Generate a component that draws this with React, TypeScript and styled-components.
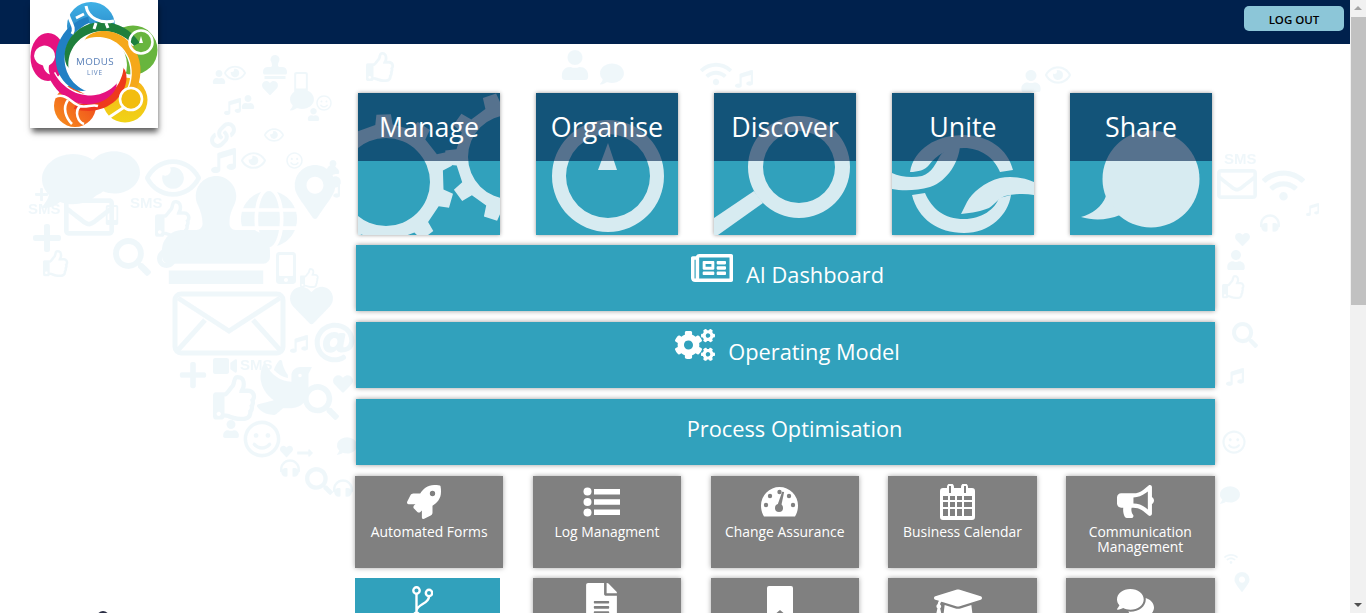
import React from "react";
import styled, { createGlobalStyle } from "styled-components";
import {
  FaAt,
  FaBullhorn,
  FaCogs,
  FaComment,
  FaComments,
  FaDove,
  FaFileAlt,
  FaGlobe,
  FaGraduationCap,
  FaHeadphones,
  FaHeart,
  FaLink,
  FaLongArrowAltRight,
  FaMapMarkerAlt,
  FaMobileAlt,
  FaMusic,
  FaPlus,
  FaRegEnvelope,
  FaRegEye,
  FaRegNewspaper,
  FaRegSmile,
  FaRegThumbsUp,
  FaRocket,
  FaSearch,
  FaStamp,
  FaUser,
  FaVideo,
  FaWifi,
} from "react-icons/fa";

const GlobalStyle = createGlobalStyle`
  html, body {
    margin: 0;
    height: 613px;
    overflow: hidden;
    background: #fff;
    font-family: "Open Sans", "Noto Sans", sans-serif;
  }
`;

const Shell = styled.div`
  display: flex;
  height: 613px;
  overflow: hidden;
`;

const Page = styled.div`
  position: relative;
  flex: 1;
  height: 613px;
  overflow: hidden;
`;

const Wallpaper = styled.svg`
  position: absolute;
  top: 0;
  left: 0;
  width: 1350px;
  height: 613px;
  color: #e6f2f8;
  filter: blur(0.7px);
  opacity: 0.6;
`;

const TopBar = styled.header`
  position: relative;
  display: flex;
  justify-content: flex-end;
  height: 44px;
  padding: 6px 6px 0 0;
  box-sizing: border-box;
  background: #00214d;
`;

const LogoutButton = styled.button`
  width: 100px;
  height: 25px;
  padding: 1px 0 0;
  border: none;
  border-radius: 5px;
  background: #8cc6d8;
  color: #000;
  font-family: inherit;
  font-size: 11.5px;
  font-weight: 600;
`;

const LogoCard = styled.div`
  position: absolute;
  top: 0;
  left: 30px;
  width: 128px;
  height: 128px;
  background: #fff;
  box-shadow: 1px 5px 6px -1px rgba(0, 0, 0, 0.65);
  svg {
    display: block;
    filter: blur(0.35px);
  }
`;

const Content = styled.main`
  position: relative;
  display: flex;
  flex-direction: column;
  width: 860px;
  margin-left: 355px;
`;

const PillarRow = styled.div`
  display: flex;
  gap: 36px;
  margin: 49px 0 10px 3px;
`;

const Pillar = styled.div`
  position: relative;
  width: 142px;
  height: 142px;
  background: #31a1bc;
  box-shadow: 0 0 4px rgba(0, 0, 0, 0.4);
  overflow: hidden;
  svg {
    display: block;
    fill: #d7ebf1;
  }
  &::after {
    content: "";
    position: absolute;
    top: 0;
    left: 0;
    right: 0;
    height: 68px;
    background: rgba(0, 33, 77, 0.6);
  }
`;

const PillarTitle = styled.span`
  position: absolute;
  z-index: 1;
  top: 14px;
  left: 0;
  right: 0;
  color: #fff;
  font-size: 26.8px;
  line-height: 40px;
  text-align: center;
`;

const Bars = styled.div`
  display: flex;
  flex-direction: column;
  gap: 11px;
  margin: 0 0 11px 1px;
`;

const Bar = styled.div<{ $inset?: number }>`
  display: flex;
  align-items: center;
  justify-content: center;
  gap: 13px;
  width: 859px;
  height: 66px;
  padding: 0 0 8px ${(p) => p.$inset ?? 4}px;
  box-sizing: border-box;
  background: #31a1bc;
  color: #fff;
  box-shadow: 0 0 5px rgba(0, 0, 0, 0.4);
  font-size: 21.8px;
  svg {
    margin-top: -12px;
  }
`;

const ModuleGrid = styled.div`
  display: grid;
  grid-template-columns: repeat(5, 148.4px);
  column-gap: 29.4px;
  row-gap: 10px;
`;

const Module = styled.div<{ $active?: boolean }>`
  display: flex;
  flex-direction: column;
  align-items: center;
  width: ${(p) => (p.$active ? "145px" : "auto")};
  height: 92px;
  padding-top: 8px;
  box-sizing: border-box;
  background: ${(p) => (p.$active ? "#31a1bc" : "#808080")};
  box-shadow: ${(p) => (p.$active ? "none" : "0 0 5px rgba(0, 0, 0, 0.35)")};
  color: #fff;
`;

const ModuleIcon = styled.div`
  display: flex;
  align-items: center;
  justify-content: center;
  height: 35px;
  margin: 0 10px 5px 0;
`;

const ModuleLabel = styled.span`
  width: 130px;
  font-size: 13.9px;
  line-height: 15px;
  text-align: center;
`;

const AvatarTip = styled.div`
  position: absolute;
  left: 97px;
  top: 611px;
  width: 12px;
  height: 12px;
  border-radius: 50%;
  background: #2b2f45;
`;

const Scrollbar = styled.aside`
  display: flex;
  flex-direction: column;
  align-items: center;
  width: 16px;
  height: 613px;
  background: #f1f1f1;
`;

const ScrollArrow = styled.div<{ $down?: boolean }>`
  width: 0;
  height: 0;
  margin: ${(p) => (p.$down ? "auto 0 6px" : "6px 0 6px")};
  border-left: 4px solid transparent;
  border-right: 4px solid transparent;
  border-bottom: ${(p) => (p.$down ? "0" : "4px solid #a3a3a3")};
  border-top: ${(p) => (p.$down ? "4px solid #505050" : "0")};
`;

const ScrollThumb = styled.div`
  width: 15px;
  height: 288px;
  margin-top: 1px;
  background: #c1c1c1;
`;

const LogoWord = styled.text<{ $size: number; $track: number }>`
  fill: #5a80b8;
  font-family: "Open Sans", sans-serif;
  font-size: ${(p) => p.$size}px;
  letter-spacing: ${(p) => p.$track}px;
  text-anchor: middle;
`;

const WallText = styled.text`
  font-family: "Liberation Sans", sans-serif;
  font-size: 15px;
  font-weight: 700;
  fill: #e6f2f8;
`;

// gear outline with a round hole, used by the Manage tile
const gearPath = (cx: number, cy: number, r: number, tip: number, hole: number, teeth: number, turn = 0) => {
  const pt = (rad: number, a: number) => `${(cx + rad * Math.cos(a)).toFixed(1)} ${(cy + rad * Math.sin(a)).toFixed(1)}`;
  const step = (Math.PI * 2) / teeth;
  let d = "";
  for (let i = 0; i < teeth; i++) {
    const a = turn + i * step;
    d += `${i ? "L" : "M"}${pt(r, a - step * 0.24)} L${pt(tip, a - step * 0.17)} L${pt(tip, a + step * 0.17)} L${pt(r, a + step * 0.24)} `;
  }
  d += `Z M${cx - hole} ${cy} a${hole} ${hole} 0 1 0 ${hole * 2} 0 a${hole} ${hole} 0 1 0 ${-hole * 2} 0 Z`;
  return d;
};

// one arm of the logo swirl: a tip at startDeg that widens clockwise into its petal
const swirlEdges = (startDeg: number, sweepDeg: number) => {
  const inner: string[] = [];
  const outer: string[] = [];
  for (let i = 0; i <= 24; i++) {
    const t = i / 24;
    const a = ((startDeg + sweepDeg * t) * Math.PI) / 180;
    const rIn = 27 + 15 * t * t;
    const rOut = 27 + 22 * Math.pow(t, 0.7);
    inner.push(`${(66 + rIn * Math.cos(a)).toFixed(1)} ${(65 + rIn * Math.sin(a)).toFixed(1)}`);
    outer.push(`${(66 + rOut * Math.cos(a)).toFixed(1)} ${(65 + rOut * Math.sin(a)).toFixed(1)}`);
  }
  return {
    fill: `M${inner.join(" L")} L${outer.reverse().join(" L")} Z`,
    edge: `M${inner.join(" L")}`,
  };
};

const swirlArms = [
  { start: 111, sweep: 150, color: "#2180c4" },
  { start: 173, sweep: 160, color: "#1f7f3c" },
  { start: -116, sweep: 166, color: "#f5a81a" },
  { start: 5, sweep: 112, color: "#ee3a1c" },
  { start: 40, sweep: 130, color: "#e5127f" },
];

const ManageArt = () => (
  <svg width="142" height="142" viewBox="0 0 142 142">
    <path fillRule="evenodd" d={gearPath(28, 89, 58, 68, 44, 10, 0.28)} />
    <path fillRule="evenodd" d={gearPath(152, 64, 54, 65, 42, 10, 0.62)} />
  </svg>
);

const OrganiseArt = () => (
  <svg width="142" height="142" viewBox="0 0 142 142">
    <path fillRule="evenodd" d="M16 83a56 56 0 1 0 112 0a56 56 0 1 0 -112 0Z M30 83a42 42 0 1 1 84 0a42 42 0 1 1 -84 0Z" />
    <path d="M72 50L81 77H62Z" />
  </svg>
);

const DiscoverArt = () => (
  <svg width="142" height="142" viewBox="0 0 142 142">
    <path fillRule="evenodd" d="M34 74a51 51 0 1 0 102 0a51 51 0 1 0 -102 0Z M49 74a36 36 0 1 1 72 0a36 36 0 1 1 -72 0Z" />
    <path d="M40 98L49 110L4 142H0V125Z" />
  </svg>
);

const UniteArt = () => (
  <svg width="142" height="142" viewBox="0 0 142 142">
    <path d="M18 79C22 56 44 42 72 42C96 42 116 56 121 77L108 79C102 64 88 55 72 55C56 55 44 62 37 72C33 77 26 79 18 79Z" />
    <path d="M20 102C26 126 46 140 72 140C98 140 116 122 119 102L107 105C103 116 90 126 72 126C52 126 40 116 33 100Z" />
    <path d="M0 80C8 84 20 85 30 83C40 80 44 70 48 63C53 56 60 54 68 53C67 68 56 88 38 94C24 98 10 98 0 96Z" />
    <path d="M142 89C130 84 118 83 108 85C92 89 80 100 75 109L69 121C80 120 90 118 97 115C103 111 107 105 113 103C122 101 132 100 142 102Z" />
  </svg>
);

const ShareArt = () => (
  <svg width="142" height="142" viewBox="0 0 142 142">
    <circle cx="81" cy="86" r="48.5" />
    <path d="M36 103C32 114 22 121 11 124C24 128 38 127 50 122Z" />
  </svg>
);

const ListIcon = () => (
  <svg width="37" height="30" viewBox="0 0 37 30">
    <g fill="#fff">
      <circle cx="4.5" cy="4.5" r="4" />
      <circle cx="4.5" cy="15" r="4" />
      <circle cx="4.5" cy="25.5" r="4" />
      <path d="M11 2h26v5.5H11Z M11 12.2h26v5.5H11Z M11 22.6h26v5.5H11Z" />
    </g>
  </svg>
);

const GaugeIcon = () => (
  <svg width="37" height="30" viewBox="0 0 37 30">
    <path fill="#fff" d="M18.5 0A18.5 18.5 0 0 1 37 18.5c0 4-1 8-3 11H3c-2-3-3-7-3-11A18.5 18.5 0 0 1 18.5 0Z" />
    <g fill="#808080">
      <circle cx="18.5" cy="5" r="2.2" />
      <circle cx="9" cy="9" r="2.2" />
      <circle cx="28" cy="9" r="2.2" />
      <circle cx="5" cy="18" r="2.2" />
      <circle cx="32" cy="18" r="2.2" />
      <circle cx="18" cy="21" r="4" />
      <path d="M19 4.5l2 0l-1 15l-4 0Z" transform="rotate(8 18 20)" />
    </g>
  </svg>
);

const CalendarIcon = () => (
  <svg width="35" height="36" viewBox="0 0 35 36">
    <path
      fill="#fff"
      fillRule="evenodd"
      d="M3 4h4V3a3 3 0 0 1 7 0v1h7V3a3 3 0 0 1 7 0v1h4a3 3 0 0 1 3 3v26a3 3 0 0 1-3 3H3a3 3 0 0 1-3-3V7a3 3 0 0 1 3-3Z
      M3 12v4h5v-4Z M10 12v4h5v-4Z M17 12v4h5v-4Z M24 12v4h8v-4Z
      M3 18v5h5v-5Z M10 18v5h5v-5Z M17 18v5h5v-5Z M24 18v5h8v-5Z
      M3 25v7h5v-7Z M10 25v7h5v-7Z M17 25v7h5v-7Z M24 25v7h8v-7Z"
    />
    <path fill="#808080" d="M9 2h2v7H9Z M24 2h2v7h-2Z" />
  </svg>
);

const BookmarkIcon = () => (
  <svg width="26" height="35" viewBox="0 0 26 35">
    <path fill="#fff" d="M2 0h22a2 2 0 0 1 2 2v33L13 24L0 35V2a2 2 0 0 1 2-2Z" />
  </svg>
);

const BranchIcon = () => (
  <svg width="21" height="35" viewBox="0 0 21 35" fill="none" stroke="#fff" strokeWidth="2.4">
    <circle cx="4.5" cy="4.5" r="3.2" />
    <circle cx="17" cy="7" r="3.2" />
    <circle cx="4.5" cy="30" r="3.2" />
    <path d="M4.5 8V27M17 10.5C17 18 5 18 4.5 25" />
  </svg>
);

const Logo = () => (
  <svg width="128" height="128" viewBox="0 0 128 128">
    <defs>
      <linearGradient id="lgBlue" x1="0" y1="0" x2="0" y2="1">
        <stop offset="0" stopColor="#3fb1e6" />
        <stop offset="1" stopColor="#1f74b8" />
      </linearGradient>
      <linearGradient id="lgYellow" x1="0" y1="0" x2="0" y2="1">
        <stop offset="0" stopColor="#f7b21b" />
        <stop offset="1" stopColor="#f0d316" />
      </linearGradient>
      <linearGradient id="lgRed" x1="1" y1="0" x2="0" y2="1">
        <stop offset="0" stopColor="#ee3a1c" />
        <stop offset="1" stopColor="#f7931e" />
      </linearGradient>
    </defs>
    <ellipse cx="18" cy="57" rx="17.5" ry="24" fill="#e5127f" />
    <circle cx="61" cy="26" r="24" fill="url(#lgBlue)" />
    <circle cx="103" cy="50" r="24.5" fill="#68b53e" />
    <circle cx="95" cy="100" r="22.5" fill="url(#lgYellow)" />
    <circle cx="45" cy="106" r="21" fill="url(#lgRed)" />
    <circle cx="66" cy="65" r="31" fill="#fff" />
    {swirlArms.map((arm) => {
      const { fill, edge } = swirlEdges(arm.start, arm.sweep);
      return (
        <g key={arm.start}>
          <path d={fill} fill={arm.color} />
          <path d={edge} fill="none" stroke="#fff" strokeWidth="1.4" />
        </g>
      );
    })}
    <path fill="#fff" d="M4 56a10.5 10.5 0 1 1 15 9.5c-.5 3-.5 6 1 9c-3-1-6-4-7-9a10.5 10.5 0 0 1-9-9.5Z" />
    <g fill="none" stroke="#fff" strokeWidth="2.6">
      <circle cx="111" cy="42" r="11.5" />
      <circle cx="101" cy="99" r="11" fill="#f2bd0f" />
      <path d="M93 108L78 118" strokeLinecap="round" strokeWidth="3" />
      <path d="M25 97C36 92 42 104 50 106C56 108 62 104 68 106" />
      <path d="M38 100C32 108 36 118 42 124" />
      <path d="M50 106C44 112 48 122 54 124" />
      <path d="M38 14C40 22 46 28 42 34" strokeWidth="3" />
      <path d="M56 6C58 18 70 24 84 21" strokeWidth="3" />
      <path d="M46 18L54 14M66 23L64 29M76 23L78 28" strokeWidth="3" />
    </g>
    <path d="M111 36L113 43H109Z" fill="#fff" />
    <LogoWord x="65" y="65" $size={9.8} $track={0.4}>MODUS</LogoWord>
    <LogoWord x="65" y="74.5" $size={6.5} $track={0.8}>LIVE</LogoWord>
  </svg>
);

// faint social icons printed on the page background: [icon, x, y, size]
const wallIcons: [React.ComponentType<any>, number, number, number][] = [
  [FaComment, 42, 150, 62],
  [FaComment, 88, 148, 52],
  [FaRegEye, 145, 150, 56],
  [FaStamp, 162, 176, 108],
  [FaGlobe, 240, 190, 58],
  [FaMapMarkerAlt, 288, 165, 54],
  [FaUser, 322, 165, 20],
  [FaMusic, 322, 182, 18],
  [FaPlus, 34, 187, 15],
  [FaRegEnvelope, 64, 192, 50],
  [FaMobileAlt, 102, 205, 20],
  [FaRegThumbsUp, 155, 200, 38],
  [FaPlus, 31, 222, 32],
  [FaRegThumbsUp, 43, 250, 27],
  [FaSearch, 113, 238, 38],
  [FaLink, 157, 236, 32],
  [FaMobileAlt, 270, 252, 32],
  [FaRegThumbsUp, 300, 268, 20],
  [FaHeart, 290, 284, 43],
  [FaPlus, 178, 360, 30],
  [FaVideo, 213, 354, 24],
  [FaMusic, 290, 335, 18],
  [FaAt, 314, 322, 41],
  [FaDove, 257, 360, 55],
  [FaSearch, 303, 384, 36],
  [FaHeart, 333, 374, 20],
  [FaRegThumbsUp, 213, 375, 46],
  [FaUser, 222, 420, 18],
  [FaRegSmile, 243, 420, 38],
  [FaHeart, 280, 445, 13],
  [FaLongArrowAltRight, 296, 444, 18],
  [FaHeadphones, 280, 458, 20],
  [FaSearch, 305, 467, 28],
  [FaHeadphones, 333, 478, 20],
  [FaComment, 337, 436, 20],
  [FaUser, 212, 70, 14],
  [FaRegEye, 224, 62, 22],
  [FaStamp, 263, 55, 24],
  [FaHeart, 262, 80, 16],
  [FaComment, 290, 88, 24],
  [FaRegSmile, 316, 95, 16],
  [FaUser, 307, 108, 13],
  [FaMusic, 224, 98, 17],
  [FaUser, 241, 95, 14],
  [FaLink, 210, 122, 26],
  [FaRegEye, 264, 125, 20],
  [FaMusic, 211, 148, 25],
  [FaRegEye, 241, 148, 25],
  [FaRegSmile, 286, 152, 17],
  [FaUser, 326, 160, 14],
  [FaRegThumbsUp, 366, 52, 30],
  [FaMobileAlt, 290, 72, 22],
  [FaWifi, 700, 58, 32],
  [FaMusic, 735, 70, 18],
  [FaUser, 560, 50, 30],
  [FaComment, 600, 62, 24],
  [FaRegEye, 1045, 62, 26],
  [FaUser, 1020, 70, 22],
  [FaRegEnvelope, 1217, 164, 40],
  [FaWifi, 1262, 164, 43],
  [FaMusic, 1306, 203, 13],
  [FaHeadphones, 1260, 213, 20],
  [FaHeart, 1235, 232, 15],
  [FaUser, 1226, 250, 20],
  [FaRegThumbsUp, 1222, 275, 24],
  [FaSearch, 1232, 322, 26],
  [FaMusic, 1226, 368, 18],
  [FaRegSmile, 1222, 430, 24],
  [FaComment, 1220, 485, 20],
  [FaWifi, 1224, 552, 14],
  [FaMapMarkerAlt, 1232, 572, 20],
];

const modules = [
  { label: "Automated Forms", icon: <FaRocket size={34} /> },
  { label: "Log Managment", icon: <ListIcon /> },
  { label: "Change Assurance", icon: <GaugeIcon /> },
  { label: "Business Calendar", icon: <CalendarIcon /> },
  { label: "Communication Management", icon: <FaBullhorn size={37} /> },
  { label: "", icon: <BranchIcon />, active: true },
  { label: "", icon: <FaFileAlt size={41} /> },
  { label: "", icon: <BookmarkIcon /> },
  { label: "", icon: <FaGraduationCap size={48} /> },
  { label: "", icon: <FaComments size={37} /> },
];

export default function App() {
  return (
    <>
      <GlobalStyle />
      <Shell>
        <Page>
          <Wallpaper viewBox="0 0 1350 613">
            {wallIcons.map(([Icon, x, y, size], i) => (
              <Icon key={i} x={x} y={y} size={size} />
            ))}
            <g fill="none" stroke="#e6f2f8" strokeWidth="5">
              <rect x="175" y="294" width="108" height="59" rx="6" />
              <path d="M178 298L229 331L280 298M178 350L205 320M280 350L253 320" />
            </g>
            <WallText x="28" y="214">SMS</WallText>
            <WallText x="130" y="208">SMS</WallText>
            <WallText x="240" y="370">SMS</WallText>
            <WallText x="1224" y="164">SMS</WallText>
          </Wallpaper>
          <TopBar>
            <LogoutButton>LOG OUT</LogoutButton>
          </TopBar>
          <LogoCard>
            <Logo />
          </LogoCard>
          <Content>
            <PillarRow>
              <Pillar><ManageArt /><PillarTitle>Manage</PillarTitle></Pillar>
              <Pillar><OrganiseArt /><PillarTitle>Organise</PillarTitle></Pillar>
              <Pillar><DiscoverArt /><PillarTitle>Discover</PillarTitle></Pillar>
              <Pillar><UniteArt /><PillarTitle>Unite</PillarTitle></Pillar>
              <Pillar><ShareArt /><PillarTitle>Share</PillarTitle></Pillar>
            </PillarRow>
            <Bars>
              <Bar><FaRegNewspaper size={42} />AI Dashboard</Bar>
              <Bar><FaCogs size={40} />Operating Model</Bar>
              <Bar $inset={18}>Process Optimisation</Bar>
            </Bars>
            <ModuleGrid>
              {modules.map((m, i) => (
                <Module key={i} $active={m.active}>
                  <ModuleIcon>{m.icon}</ModuleIcon>
                  <ModuleLabel>{m.label}</ModuleLabel>
                </Module>
              ))}
            </ModuleGrid>
          </Content>
          <AvatarTip />
        </Page>
        <Scrollbar>
          <ScrollArrow />
          <ScrollThumb />
          <ScrollArrow $down />
        </Scrollbar>
      </Shell>
    </>
  );
}
